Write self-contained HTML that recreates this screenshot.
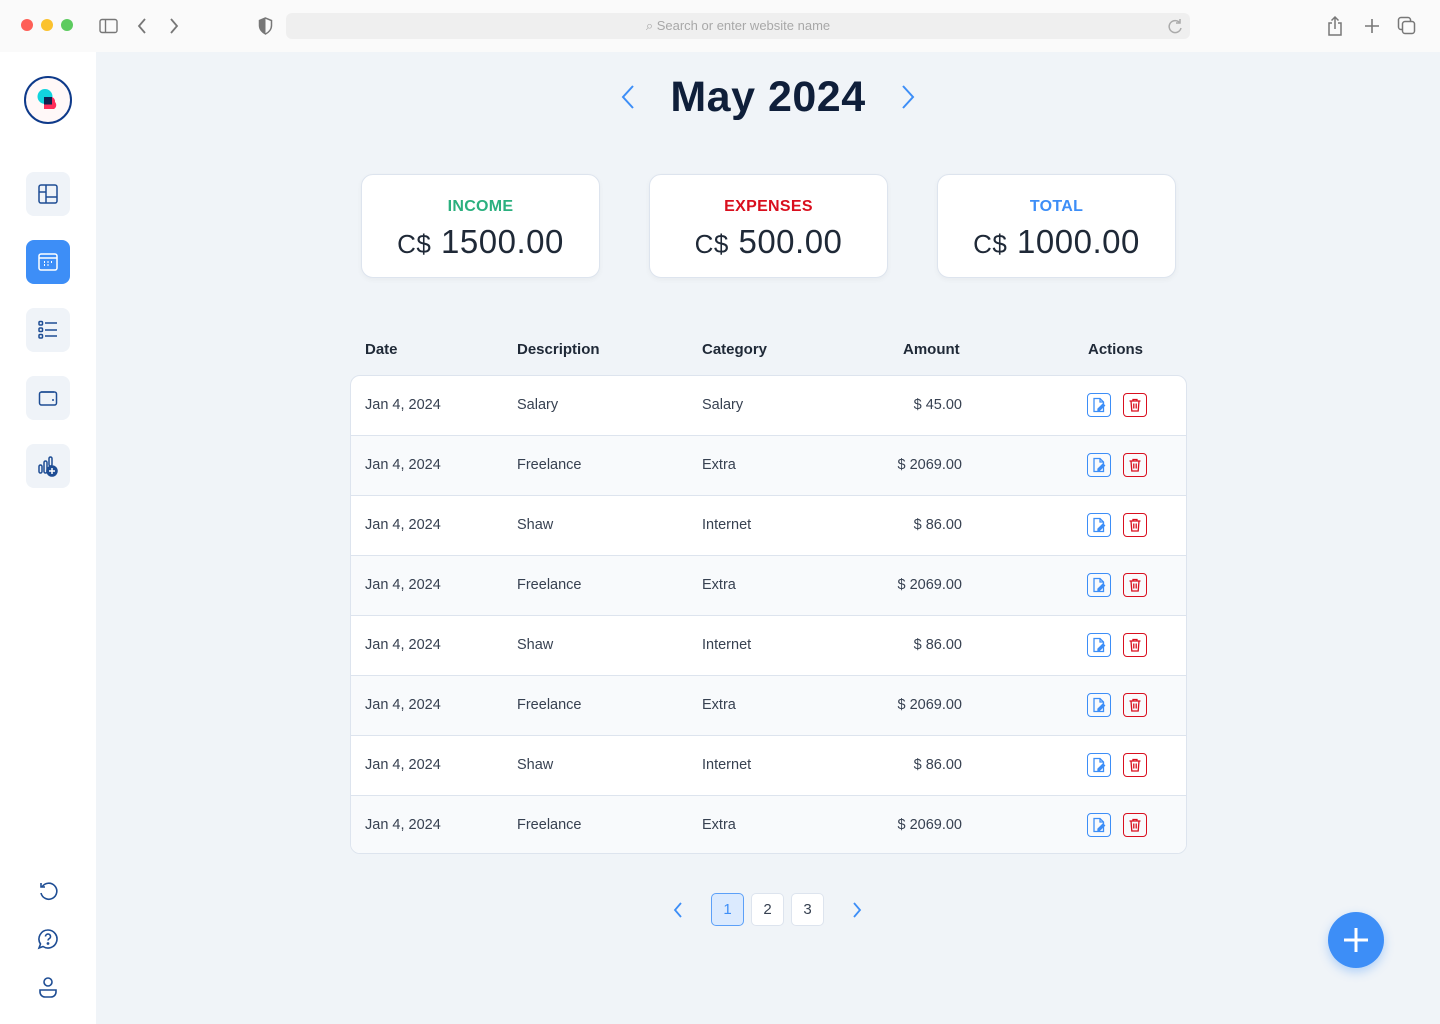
<!DOCTYPE html>
<html><head><meta charset="utf-8"><style>
*{box-sizing:border-box;margin:0;padding:0}
body{width:1440px;height:1024px;overflow:hidden;font-family:"Liberation Sans",sans-serif;background:#f0f4f8;position:relative;color:#1f2937}
.top{position:absolute;left:0;top:0;width:1440px;height:52px;background:#fafafa}
.dot{position:absolute;top:19px;width:12px;height:12px;border-radius:50%}
.url{position:absolute;left:286px;top:13px;width:904px;height:26px;background:#efefef;border-radius:6px;font-size:13px;color:#a8a8a8;text-align:center;line-height:26px}
.side{position:absolute;left:0;top:52px;width:96px;height:972px;background:#fff}
.nb{position:absolute;left:26px;width:44px;height:44px;border-radius:8px;background:#eff3f8;display:flex;align-items:center;justify-content:center}
.card{position:absolute;top:174px;width:239px;height:104px;background:#fff;border:1px solid #dde4ee;border-radius:12px;text-align:center;box-shadow:0 2px 6px rgba(0,0,0,.04)}
.card .l{font-weight:bold;font-size:16px;margin-top:23px;letter-spacing:.3px}
.card .v{font-size:33px;margin-top:7px;color:#1f2937;letter-spacing:.5px}
.card .v small{font-size:26px}
.th{position:absolute;top:341px;font-size:15px;font-weight:bold;color:#1f2937}
.tbl{position:absolute;left:350px;top:375px;width:837px;height:479px;background:#fff;border:1px solid #dde4ee;border-radius:10px;overflow:hidden}
.row{position:relative;height:60px;border-bottom:1px solid #dde4ee;font-size:14.5px;color:#374151}
.row:last-child{border-bottom:none}
.row:nth-child(even){background:#f8fafc}
.row span{position:absolute;top:21px}
.ic{position:absolute;top:17px;width:24px;height:24px;border-radius:4px;display:flex;align-items:center;justify-content:center}
.pg{position:absolute;top:893px;width:33px;height:33px;border-radius:5px;border:1.5px solid #dde4ee;background:#fff;text-align:center;line-height:32px;font-size:15px;color:#374151}
</style></head><body>
<div class="top">
<div class="dot" style="left:21px;background:#fe5f57"></div><div class="dot" style="left:41px;background:#fbc22e"></div><div class="dot" style="left:61px;background:#5ccb5f"></div>
<svg style="position:absolute;left:99px;top:18px" width="20" height="16" viewBox="0 0 20 16" fill="none" stroke="#777" stroke-width="1.4"><rect x="1" y="1.5" width="17" height="13" rx="2"/><line x1="6.5" y1="1.5" x2="6.5" y2="14.5"/></svg>
<svg style="position:absolute;left:136px;top:17px" width="12" height="18" fill="none" stroke="#777" stroke-width="1.8"><path d="M9 2L3 9l6 7"/></svg>
<svg style="position:absolute;left:168px;top:17px" width="12" height="18" fill="none" stroke="#777" stroke-width="1.8"><path d="M3 2l6 7-6 7"/></svg>
<svg style="position:absolute;left:258px;top:17px" width="15" height="18" viewBox="0 0 15 18"><path d="M7.5 1L1.5 3.5v5c0 4 3 7 6 8.5 3-1.5 6-4.5 6-8.5v-5z" fill="none" stroke="#777" stroke-width="1.5"/><path d="M7.5 1v16c-3-1.5-6-4.5-6-8.5v-5z" fill="#777"/></svg>
<div class="url">⌕ Search or enter website name</div>
<svg style="position:absolute;left:1166px;top:17px" width="18" height="18" fill="none" stroke="#aaa" stroke-width="1.5"><path d="M14 6a6 6 0 1 0 1 5"/><path d="M14 2v4h-4"/></svg>
<svg style="position:absolute;left:1326px;top:15px" width="18" height="22" fill="none" stroke="#777" stroke-width="1.5"><path d="M6 8H3v12h12V8h-3M9 14V2M5.5 5.5L9 2l3.5 3.5"/></svg>
<svg style="position:absolute;left:1363px;top:17px" width="18" height="18" stroke="#777" stroke-width="1.6"><path d="M9 2v14M2 9h14"/></svg>
<svg style="position:absolute;left:1397px;top:16px" width="20" height="20" fill="none" stroke="#777" stroke-width="1.5"><rect x="1.5" y="1.5" width="12" height="12" rx="2.5"/><rect x="5.5" y="5.5" width="12" height="12" rx="2.5" fill="#fafafa"/></svg>
</div>
<div class="side">
<div style="position:absolute;left:24px;top:24px;width:48px;height:48px;border-radius:50%;border:2px solid #0e3a8a;background:#fff8f8">
<svg width="44" height="44" viewBox="0 0 44 44"><circle cx="19" cy="18.5" r="7.5" fill="#12d4de"/><path d="M18 19h8a5 5 0 0 1 3 5 4.5 4.5 0 0 1-1 7H18z" fill="#ff2d5a"/><path d="M18 19h8v7.5h-8z" fill="#0f2350"/></svg></div>
<div class="nb" style="top:120px"><svg width="22" height="22" fill="none" stroke="#1e4d94" stroke-width="1.5"><rect x="2" y="2" width="18" height="18" rx="2"/><path d="M9 2v18M2 9h7M9 14h11"/></svg></div>
<div class="nb" style="top:188px;background:#3d8ef7"><svg width="22" height="22" fill="none" stroke="#fff" stroke-width="1.5"><rect x="2" y="3" width="18" height="16" rx="2"/><path d="M2 7h18"/><path d="M7 11h1M10.5 11h1M14 11h1M7 14h1M10.5 14h1" stroke-width="2"/></svg></div>
<div class="nb" style="top:256px"><svg width="22" height="22" fill="none" stroke="#1e4d94" stroke-width="1.5"><rect x="2" y="2.5" width="3.5" height="3.5" rx="1"/><rect x="2" y="9" width="3.5" height="3.5" rx="1"/><rect x="2" y="15.5" width="3.5" height="3.5" rx="1"/><path d="M8 4h12M8 11h12M8 17h12"/></svg></div>
<div class="nb" style="top:324px"><svg width="22" height="22" fill="none" stroke="#1e4d94" stroke-width="1.5"><path d="M4 5h13"/><rect x="2.5" y="5" width="17" height="13" rx="2"/><path d="M15 13h2"/></svg></div>
<div class="nb" style="top:392px"><svg width="24" height="24" fill="none" stroke="#1e4d94" stroke-width="1.5"><rect x="3" y="11" width="3" height="8" rx="1.5"/><rect x="8" y="7" width="3" height="12" rx="1.5"/><rect x="13" y="3" width="3" height="9" rx="1.5"/><circle cx="16" cy="17" r="5" fill="#1e4d94"/><path d="M16 14v6M13 17h6" stroke="#fff"/></svg></div>
<svg style="position:absolute;left:37px;top:828px" width="22" height="22" fill="none" stroke="#1e4d94" stroke-width="1.6"><path d="M5 7a8 8 0 1 1-1 6"/><path d="M4 3v4h4"/></svg>
<svg style="position:absolute;left:37px;top:876px" width="22" height="22" fill="none" stroke="#1e4d94" stroke-width="1.6"><path d="M11 2a9 9 0 1 1-5 16.5L2 20l1.5-4A9 9 0 0 1 11 2z"/><path d="M8.5 8.5a2.5 2.5 0 1 1 3.5 2.3c-.7.4-1 .8-1 1.7"/><circle cx="11" cy="15.5" r=".6" fill="#1e4d94"/></svg>
<svg style="position:absolute;left:37px;top:924px" width="22" height="24" fill="none" stroke="#1e4d94" stroke-width="1.6"><circle cx="11" cy="6" r="4"/><path d="M3 14h16v2a5 5 0 0 1-5 5H8a5 5 0 0 1-5-5z"/></svg>
</div>
<svg style="position:absolute;left:620px;top:84px" width="16" height="26" fill="none" stroke="#3d8ef7" stroke-width="2"><path d="M13 2L3 13l10 11"/></svg>
<div style="position:absolute;left:0;width:1536px;top:73px;text-align:center;font-size:43px;font-weight:bold;color:#0f1f3a;letter-spacing:.5px">May 2024</div>
<svg style="position:absolute;left:900px;top:84px" width="16" height="26" fill="none" stroke="#3d8ef7" stroke-width="2"><path d="M3 2l10 11L3 24"/></svg>
<div class="card" style="left:361px"><div class="l" style="color:#2bb07f">INCOME</div><div class="v"><small>C$</small> 1500.00</div></div>
<div class="card" style="left:649px"><div class="l" style="color:#d90f1e">EXPENSES</div><div class="v"><small>C$</small> 500.00</div></div>
<div class="card" style="left:937px"><div class="l" style="color:#3d8ef7">TOTAL</div><div class="v"><small>C$</small> 1000.00</div></div>
<div class="th" style="left:365px">Date</div><div class="th" style="left:517px">Description</div><div class="th" style="left:702px">Category</div><div class="th" style="left:903px">Amount</div><div class="th" style="left:1088px">Actions</div>
<div class="tbl" id="t"></div>
<svg style="position:absolute;left:672px;top:901px" width="12" height="18" fill="none" stroke="#3d8ef7" stroke-width="1.8"><path d="M9 2L3 9l6 7"/></svg>
<div class="pg" style="left:711px;background:#dbeafe;border-color:#5ca0f8;color:#3d8ef7">1</div>
<div class="pg" style="left:751px">2</div><div class="pg" style="left:791px">3</div>
<svg style="position:absolute;left:851px;top:901px" width="12" height="18" fill="none" stroke="#3d8ef7" stroke-width="1.8"><path d="M3 2l6 7-6 7"/></svg>
<div style="position:absolute;left:1328px;top:912px;width:56px;height:56px;border-radius:50%;background:#3d8ef7;box-shadow:0 4px 10px rgba(61,142,247,.35)"><svg width="56" height="56" stroke="#fff" stroke-width="3"><path d="M28 16v24M16 28h24"/></svg></div>
<script>
var d=[["Salary","Salary","45.00"],["Freelance","Extra","2069.00"],["Shaw","Internet","86.00"],["Freelance","Extra","2069.00"],["Shaw","Internet","86.00"],["Freelance","Extra","2069.00"],["Shaw","Internet","86.00"],["Freelance","Extra","2069.00"]];
var h="";d.forEach(function(r){h+='<div class="row"><span style="left:14px">Jan 4, 2024</span><span style="left:166px">'+r[0]+'</span><span style="left:351px">'+r[1]+'</span><span style="right:224px">$ '+r[2]+'</span>'+
'<div class="ic" style="left:736px;border:1.5px solid #3d8ef7"><svg width="16" height="16" fill="none" stroke="#3d8ef7" stroke-width="1.3"><path d="M3 1.5h6l3.5 3.5v9.5H3z"/><path d="M9 1.5V5h3.5"/><path d="M7 12l5-5 1.5 1.5-5 5H7z" fill="#3d8ef7"/></svg></div>'+
'<div class="ic" style="left:772px;border:1.5px solid #d90f1e"><svg width="16" height="16" fill="none" stroke="#d90f1e" stroke-width="1.3"><path d="M2.5 4h11M6 4V2.5h4V4M4 4l.8 10h6.4L12 4M6.8 6.5v5M9.2 6.5v5"/></svg></div></div>'});
document.getElementById("t").innerHTML=h;
</script>
</body></html>
